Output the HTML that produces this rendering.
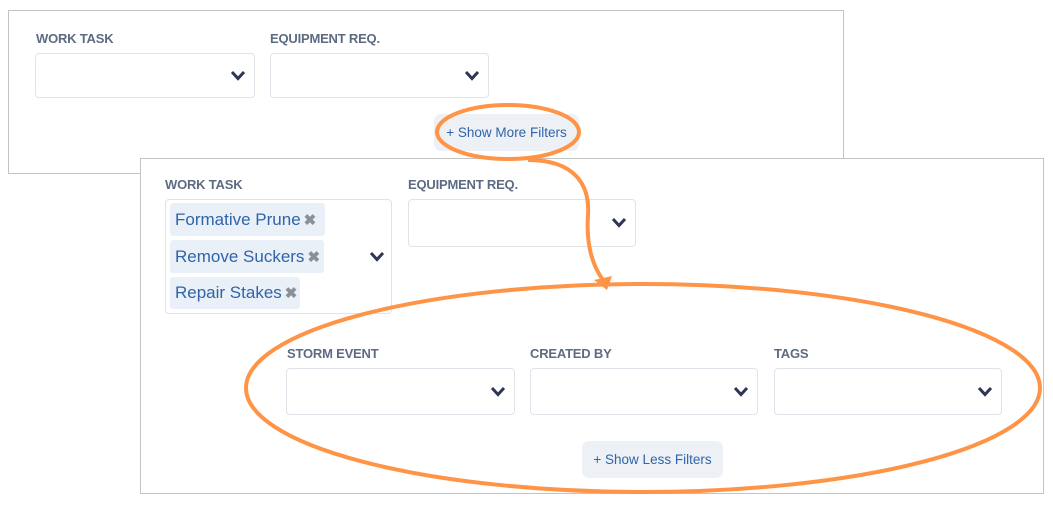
<!DOCTYPE html><html><head><style>
body{margin:0;width:1053px;height:509px;background:#fff;position:relative;overflow:hidden;font-family:"Liberation Sans",sans-serif}
.a{position:absolute;box-sizing:border-box}
.p{border:1px solid #c4c4c4;background:#fff}
.l{font-size:13px;color:#5d6b82;font-weight:bold;letter-spacing:-0.2px;font-weight:600}
.s{border:1px solid #dfe3ea;border-radius:4px;background:#fff}
.c{position:absolute;right:8px;top:50%;margin-top:-6px}
.b{background:#edf1f6;border-radius:7px;color:#2f64a8;font-size:13.5px;display:flex;align-items:center;justify-content:center}
.chip{background:#eaf0f7;border-radius:3px;color:#2f64a8;font-size:17px;display:flex;align-items:center;padding-left:5px}
.x{color:#8a8f98;font-weight:bold;margin-left:3px;font-size:15px}
</style></head><body>
<svg width="0" height="0" style="position:absolute"><defs><symbol id="cv" viewBox="0 0 16 12"><path d="M2 2 L8 8.5 L14 2" fill="none" stroke="#2f3553" stroke-width="3"/></symbol></defs></svg>
<div class="a p" style="left:8px;top:10px;width:836px;height:164px"></div>
<div class="a l" style="left:36px;top:31px">WORK TASK</div>
<div class="a l" style="left:270px;top:31px">EQUIPMENT REQ.</div>
<div class="a s" style="left:35px;top:53px;width:220px;height:45px"><svg class="c" width="16" height="12"><use href="#cv"/></svg></div>
<div class="a s" style="left:270px;top:53px;width:219px;height:45px"><svg class="c" width="16" height="12"><use href="#cv"/></svg></div>
<div class="a b" style="left:434px;top:114px;width:145px;height:37px">+ Show More Filters</div>

<div class="a p" style="left:140px;top:158px;width:904px;height:336px"></div>
<div class="a l" style="left:165px;top:177px">WORK TASK</div>
<div class="a l" style="left:408px;top:177px">EQUIPMENT REQ.</div>
<div class="a s" style="left:165px;top:199px;width:227px;height:115px"><svg class="c" width="16" height="12" style="right:6px"><use href="#cv"/></svg></div>
<div class="a chip" style="left:170px;top:203px;width:155px;height:33px">Formative Prune<span class="x">✖</span></div>
<div class="a chip" style="left:170px;top:240px;width:154px;height:33px">Remove Suckers<span class="x">✖</span></div>
<div class="a chip" style="left:170px;top:277px;width:130px;height:32px">Repair Stakes<span class="x">✖</span></div>
<div class="a s" style="left:408px;top:199px;width:228px;height:48px"><svg class="c" width="16" height="12"><use href="#cv"/></svg></div>
<div class="a l" style="left:287px;top:346px">STORM EVENT</div>
<div class="a l" style="left:530px;top:346px">CREATED BY</div>
<div class="a l" style="left:774px;top:346px">TAGS</div>
<div class="a s" style="left:286px;top:368px;width:229px;height:47px"><svg class="c" width="16" height="12"><use href="#cv"/></svg></div>
<div class="a s" style="left:530px;top:368px;width:228px;height:47px"><svg class="c" width="16" height="12"><use href="#cv"/></svg></div>
<div class="a s" style="left:774px;top:368px;width:228px;height:47px"><svg class="c" width="16" height="12"><use href="#cv"/></svg></div>
<div class="a b" style="left:582px;top:441px;width:141px;height:37px">+ Show Less Filters</div>

<svg class="a" style="left:0;top:0" width="1053" height="509">
<g fill="none" stroke="#ff9447" stroke-width="4">
<ellipse cx="508" cy="132" rx="71" ry="27"/>
<ellipse cx="643" cy="388" rx="397" ry="104"/>
<path d="M528 160 C575 160 590 185 588 215 C586 245 592 265 603 280"/>
</g>
<path d="M594 280 L612 276 L607 290 Z" fill="#ff9447"/>
</svg>
</body></html>
